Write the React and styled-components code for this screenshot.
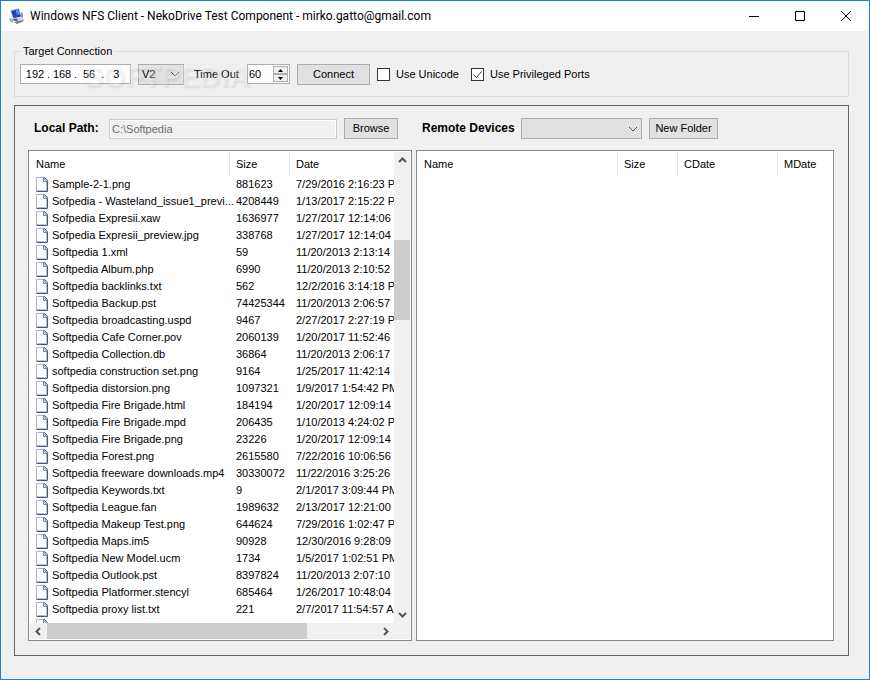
import React from 'react';
import styled, { createGlobalStyle } from 'styled-components';

const GlobalStyle = createGlobalStyle`
  * {
    box-sizing: border-box;
  }

  body {
    margin: 0;
    background: #f0f0f0;
  }

  body, button, input, select {
    font-family: 'Liberation Sans', Arial, sans-serif;
    font-size: 11px;
    line-height: 13px;
    color: #000;
  }
`;

const Window = styled.div`
  display: flex;
  flex-direction: column;
  height: 100vh;
  border: 1px solid #1883d7;
  background: #f0f0f0;
`;

const TitleBar = styled.header`
  display: flex;
  align-items: center;
  height: 30px;
  padding-left: 8px;
  background: #fff;
`;

const Title = styled.h1`
  flex: 1;
  margin: 0 0 0 5px;
  font-family: Roboto, 'Open Sans', sans-serif;
  font-size: 12px;
  line-height: 16px;
  font-weight: 400;
`;

const CaptionButton = styled.button`
  display: flex;
  align-items: center;
  justify-content: center;
  width: 46px;
  height: 30px;
  padding: 0;
  border: none;
  background: none;
`;

const Body = styled.main`
  flex: 1;
  display: flex;
  flex-direction: column;
  gap: 8px;
  min-height: 0;
  padding: 14px 20px 23px 13px;
`;

const GroupBox = styled.fieldset`
  position: relative;
  margin: 0;
  padding: 5px 5px 11px;
  border: 1px solid #dcdcdc;
`;

const Legend = styled.legend`
  padding: 0 3px;
`;

const ConnectionRow = styled.div`
  display: flex;
  align-items: center;
  gap: 7px;
  height: 22px;
`;

const IpBox = styled.div`
  display: flex;
  align-items: center;
  width: 111px;
  height: 20px;
  padding: 0 2px;
  border: 1px solid #abadb3;
  background: #fff;
`;

const Octet = styled.input`
  width: 24px;
  padding: 0;
  border: none;
  outline: none;
  background: none;
  text-align: center;
`;

const SelectBox = styled.div`
  display: grid;
  align-items: center;
  width: ${(props) => props.$width}px;
  height: 21px;

  select {
    grid-area: 1 / 1;
    width: 100%;
    height: 100%;
    padding: 0 3px;
    border: 1px solid #adadad;
    border-radius: 0;
    background: #e1e1e1;
    appearance: none;
  }

  svg {
    grid-area: 1 / 1;
    justify-self: end;
    margin-right: 4px;
    pointer-events: none;
  }
`;

const FieldLabel = styled.label`
  width: 49px;
  padding-left: 3px;
  white-space: nowrap;
`;

const NumberBox = styled.div`
  display: flex;
  width: 43px;
  height: 20px;
  padding: 1px;
  border: 1px solid #abadb3;
  background: #fff;

  input {
    flex: 1;
    min-width: 0;
    padding: 0;
    border: none;
    outline: none;
  }
`;

const Spinner = styled.div`
  display: flex;
  flex-direction: column;
  width: 15px;
`;

const SpinButton = styled.button`
  flex: 1;
  display: flex;
  align-items: center;
  justify-content: center;
  min-height: 0;
  padding: 0;
  border: 1px solid #adadad;
  background: #f0f0f0;
`;

const Button = styled.button`
  width: ${(props) => props.$width}px;
  height: 21px;
  padding: 0;
  border: 1px solid #adadad;
  background: #e1e1e1;
  white-space: nowrap;
`;

const CheckLabel = styled.label`
  display: flex;
  align-items: center;
  gap: 6px;
  min-width: 87px;
  white-space: nowrap;
`;

const CheckBox = styled.span`
  display: grid;

  input {
    grid-area: 1 / 1;
    width: 13px;
    height: 13px;
    margin: 0;
    border: 1px solid #333;
    background: #fff;
    appearance: none;
  }

  svg {
    grid-area: 1 / 1;
    visibility: hidden;
    pointer-events: none;
  }

  input:checked + svg {
    visibility: visible;
  }
`;

const Watermark = styled.span`
  position: absolute;
  left: 69px;
  top: 0;
  font-size: 29px;
  line-height: 36px;
  font-weight: 700;
  color: rgba(255, 255, 255, 0.3);
  text-shadow: 1px 2px 2px rgba(0, 0, 0, 0.08);
  pointer-events: none;
`;

const Browser = styled.section`
  flex: 1;
  display: grid;
  grid-template-columns: 384fr 418fr;
  gap: 4px;
  min-height: 0;
  padding: 12px 14px 14px 13px;
  border: 1px solid #646464;
`;

const Pane = styled.div`
  display: flex;
  flex-direction: column;
  gap: 11px;
  min-width: 0;
  min-height: 0;
`;

const PaneTools = styled.div`
  display: flex;
  align-items: center;
  gap: 7px;
  height: 21px;
  padding: 0 14px 0 6px;
`;

const PaneLabel = styled.label`
  width: ${(props) => props.$width}px;
  font-size: 12px;
  font-weight: 700;
  white-space: nowrap;
`;

const PathInput = styled.input`
  flex: 1;
  min-width: 0;
  height: 20px;
  padding: 0 2px;
  border: 1px solid #ccc;
  box-shadow: inset 0 0 0 1px #fff;
  background: #f0f0f0;

  &:disabled {
    color: #6d6d6d;
  }
`;

const ListBox = styled.div`
  flex: 1;
  display: grid;
  grid-template-columns: minmax(0, 1fr) auto;
  grid-template-rows: minmax(0, 1fr) auto;
  min-height: 0;
  padding: 1px;
  border: 1px solid #828790;
  background: #fff;
`;

const ListView = styled.div`
  overflow: hidden;
`;

const Table = styled.table`
  width: 100%;
  border-collapse: separate;
  border-spacing: 0;
  table-layout: fixed;
`;

const HeadCell = styled.th`
  width: ${(props) => (props.$width ? `${props.$width}px` : 'auto')};
  height: 24px;
  padding: 0 6px;
  border-right: ${(props) => (props.$width ? '1px solid #e5e5e5' : 'none')};
  font-weight: 400;
  text-align: left;
`;

const Cell = styled.td`
  height: 17px;
  padding: 0 0 0 6px;
  line-height: 17px;
  white-space: nowrap;
`;

const FileName = styled.div`
  display: flex;
  align-items: center;
  gap: 4px;
  height: 17px;

  svg {
    flex-shrink: 0;
  }
`;

const ScrollBar = styled.div`
  display: flex;
  flex-direction: ${(props) => (props.$vertical ? 'column' : 'row')};
  ${(props) => (props.$vertical ? 'width: 16px;' : 'height: 16px;')}
  background: #f0f0f0;
`;

const ScrollButton = styled.button`
  display: flex;
  align-items: center;
  justify-content: center;
  flex: 0 0 17px;
  padding: 0;
  border: none;
  background: #f0f0f0;
`;

const TrackGap = styled.div`
  flex: ${(props) => props.$size};
`;

const Thumb = styled.div`
  flex: ${(props) => props.$size};
  background: #cdcdcd;
`;

const Corner = styled.div`
  background: #f0f0f0;
`;

const files = [
  ['Sample-2-1.png', '881623', '7/29/2016 2:16:23 PM'],
  ['Sofpedia - Wasteland_issue1_previ...', '4208449', '1/13/2017 2:15:22 PM'],
  ['Sofpedia Expresii.xaw', '1636977', '1/27/2017 12:14:06'],
  ['Sofpedia Expresii_preview.jpg', '338768', '1/27/2017 12:14:04'],
  ['Softpedia 1.xml', '59', '11/20/2013 2:13:14'],
  ['Softpedia Album.php', '6990', '11/20/2013 2:10:52'],
  ['Softpedia backlinks.txt', '562', '12/2/2016 3:14:18 PM'],
  ['Softpedia Backup.pst', '74425344', '11/20/2013 2:06:57'],
  ['Softpedia broadcasting.uspd', '9467', '2/27/2017 2:27:19 PM'],
  ['Softpedia Cafe Corner.pov', '2060139', '1/20/2017 11:52:46'],
  ['Softpedia Collection.db', '36864', '11/20/2013 2:06:17'],
  ['softpedia construction set.png', '9164', '1/25/2017 11:42:14'],
  ['Softpedia distorsion.png', '1097321', '1/9/2017 1:54:42 PM'],
  ['Softpedia Fire Brigade.html', '184194', '1/20/2017 12:09:14'],
  ['Softpedia Fire Brigade.mpd', '206435', '1/10/2013 4:24:02 PM'],
  ['Softpedia Fire Brigade.png', '23226', '1/20/2017 12:09:14'],
  ['Softpedia Forest.png', '2615580', '7/22/2016 10:06:56'],
  ['Softpedia freeware downloads.mp4', '30330072', '11/22/2016 3:25:26'],
  ['Softpedia Keywords.txt', '9', '2/1/2017 3:09:44 PM'],
  ['Softpedia League.fan', '1989632', '2/13/2017 12:21:00'],
  ['Softpedia Makeup Test.png', '644624', '7/29/2016 1:02:47 PM'],
  ['Softpedia Maps.im5', '90928', '12/30/2016 9:28:09'],
  ['Softpedia New Model.ucm', '1734', '1/5/2017 1:02:51 PM'],
  ['Softpedia Outlook.pst', '8397824', '11/20/2013 2:07:10'],
  ['Softpedia Platformer.stencyl', '685464', '1/26/2017 10:48:04'],
  ['Softpedia proxy list.txt', '221', '2/7/2017 11:54:57 AM'],
  ['', '', ''],
];

const AppIcon = () => (
  <svg width="16" height="16" viewBox="0 0 16 16">
    <path d="M1 2l9-2 3 9-9 2z" fill="#c9d3ea" />
    <path d="M2 3l7.500-2 2.500 7.500-7.500 1.500z" fill="#1a40c8" />
    <path d="M6.500 1.800L9 1l2 5-3 1z" fill="#5f8df2" />
    <path d="M12 4l2 1v5l-2 1z" fill="#9aa0aa" />
    <path d="M0 10l4 1v4l-3-2z" fill="#a4a8b0" />
    <path d="M5 11l8-2 2 3-7 3z" fill="#d2d4d9" />
    <path d="M4 11l4-.5 1 2-4 .5z" fill="#50555f" />
    <path d="M5 14l9-2 1 1-7 3z" fill="#777c85" />
  </svg>
);

const FileIcon = () => (
  <svg width="12" height="15" viewBox="0 0 12 15">
    <path d="M.5.5h7l4 4v10H.5z" fill="#fff" />
    <path d="M10.500 5v8.500H1" fill="none" stroke="#b4c3de" />
    <path d="M.5 14V.5H8" fill="none" stroke="#a3b5d3" />
    <path d="M7.500.5h1l3 3v11H.5" fill="none" stroke="#44577d" />
    <path d="M7.500 1v3.500H11z" fill="#dfe7f4" stroke="#7287ae" />
  </svg>
);

const arrows = {
  up: 'M1 6l3.5-3.5L8 6',
  down: 'M1 3l3.5 3.5L8 3',
  left: 'M6 1L2.5 4.5 6 8',
  right: 'M3 1l3.5 3.5L3 8',
};

const ScrollArrow = ({ dir }) => (
  <svg width="9" height="9" viewBox="0 0 9 9">
    <path d={arrows[dir]} fill="none" stroke="#555" strokeWidth="2" />
  </svg>
);

const Chevron = () => (
  <svg width="10" height="6" viewBox="0 0 10 6">
    <path d="M1 1l4 4 4-4" fill="none" stroke="#555" />
  </svg>
);

const FileTable = ({ columns, rows }) => (
  <ListView>
    <Table>
      <thead>
        <tr>
          {columns.map(([name, width]) => (
            <HeadCell key={name} $width={width}>{name}</HeadCell>
          ))}
        </tr>
      </thead>
      <tbody>
        {rows.map(([name, size, date]) => (
          <tr key={name}>
            <Cell>
              <FileName>
                <FileIcon />
                {name}
              </FileName>
            </Cell>
            <Cell>{size}</Cell>
            <Cell>{date}</Cell>
          </tr>
        ))}
      </tbody>
    </Table>
  </ListView>
);

const App = () => {
  return (
    <>
      <GlobalStyle />
      <Window>
        <TitleBar>
          <AppIcon />
          <Title>Windows NFS Client - NekoDrive Test Component - mirko.gatto@gmail.com</Title>
          <CaptionButton aria-label="Minimize">
            <svg width="10" height="10"><path d="M0 5.5h10" stroke="#000" /></svg>
          </CaptionButton>
          <CaptionButton aria-label="Maximize">
            <svg width="10" height="10"><path d="M.5.5h9v9h-9z" fill="none" stroke="#000" /></svg>
          </CaptionButton>
          <CaptionButton aria-label="Close">
            <svg width="10" height="10"><path d="M0 0l10 10M10 0L0 10" stroke="#000" /></svg>
          </CaptionButton>
        </TitleBar>

        <Body>
          <GroupBox>
            <Legend>Target Connection</Legend>
            <ConnectionRow>
              <IpBox role="group" aria-label="IP address">
                <Octet aria-label="Octet 1" defaultValue="192" />.
                <Octet aria-label="Octet 2" defaultValue="168" />.
                <Octet aria-label="Octet 3" defaultValue="56" />.
                <Octet aria-label="Octet 4" defaultValue="3" />
              </IpBox>
              <SelectBox $width={46}>
                <select aria-label="NFS version" defaultValue="V2">
                  <option>V2</option>
                </select>
                <Chevron />
              </SelectBox>
              <FieldLabel htmlFor="timeout">Time Out</FieldLabel>
              <NumberBox>
                <input id="timeout" defaultValue="60" />
                <Spinner>
                  <SpinButton aria-label="Increase">
                    <svg width="5" height="3"><path d="M0 3l2.500-3L5 3z" /></svg>
                  </SpinButton>
                  <SpinButton aria-label="Decrease">
                    <svg width="5" height="3"><path d="M0 0l2.500 3L5 0z" /></svg>
                  </SpinButton>
                </Spinner>
              </NumberBox>
              <Button $width={73}>Connect</Button>
              {[['Use Unicode', false], ['Use Privileged Ports', true]].map(([label, checked]) => (
                <CheckLabel key={label}>
                  <CheckBox>
                    <input type="checkbox" defaultChecked={checked} />
                    <svg width="13" height="13"><path d="M2.500 6.500l3 3 5-6" fill="none" stroke="#333" /></svg>
                  </CheckBox>
                  {label}
                </CheckLabel>
              ))}
            </ConnectionRow>
            <Watermark aria-hidden="true">SOFTPEDIA</Watermark>
          </GroupBox>

          <Browser>
            <Pane>
              <PaneTools>
                <PaneLabel htmlFor="path" $width={68}>Local Path:</PaneLabel>
                <PathInput id="path" defaultValue="C:\Softpedia" disabled />
                <Button $width={54}>Browse</Button>
              </PaneTools>
              <ListBox>
                <FileTable columns={[['Name', 200], ['Size', 60], ['Date']]} rows={files} />
                <ScrollBar $vertical>
                  <ScrollButton aria-label="Scroll up"><ScrollArrow dir="up" /></ScrollButton>
                  <TrackGap $size={71} />
                  <Thumb $size={80} />
                  <TrackGap $size={286} />
                  <ScrollButton aria-label="Scroll down"><ScrollArrow dir="down" /></ScrollButton>
                </ScrollBar>
                <ScrollBar>
                  <ScrollButton aria-label="Scroll left"><ScrollArrow dir="left" /></ScrollButton>
                  <Thumb $size={260} />
                  <TrackGap $size={70} />
                  <ScrollButton aria-label="Scroll right"><ScrollArrow dir="right" /></ScrollButton>
                </ScrollBar>
                <Corner />
              </ListBox>
            </Pane>
            <Pane>
              <PaneTools>
                <PaneLabel htmlFor="device" $width={92}>Remote Devices</PaneLabel>
                <SelectBox $width={121}>
                  <select id="device" />
                  <Chevron />
                </SelectBox>
                <Button $width={69}>New Folder</Button>
              </PaneTools>
              <ListBox>
                <FileTable columns={[['Name', 200], ['Size', 60], ['CDate', 100], ['MDate']]} rows={[]} />
              </ListBox>
            </Pane>
          </Browser>
        </Body>
      </Window>
    </>
  );
};

export default App;
